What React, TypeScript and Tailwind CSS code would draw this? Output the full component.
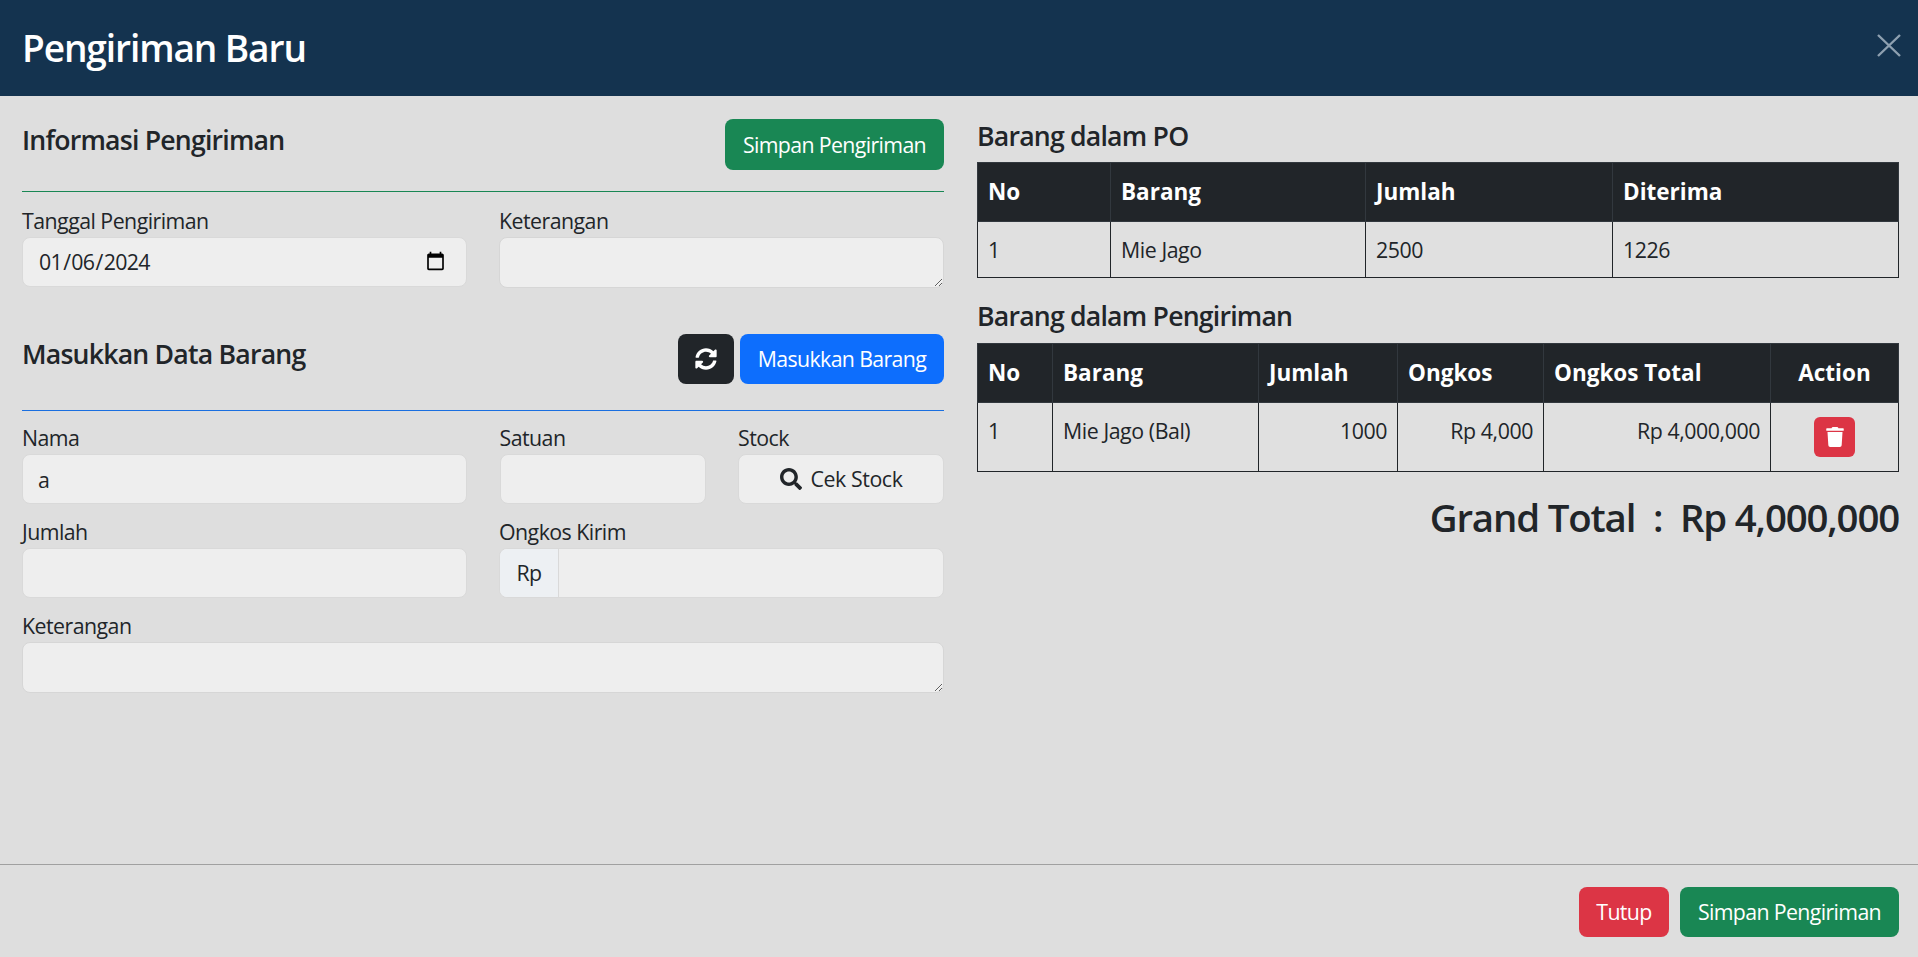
import { FaSearch, FaSyncAlt, FaTrash } from "react-icons/fa";

const label = "block text-[#212529] text-[21.33px] leading-[26px] mb-[3px] tracking-[-0.025em]";
const field = "block w-full h-[50px] rounded-[8px] border border-[#d9d9d9] bg-[#eeeeee] pl-[15px] pr-[18px] text-[21.33px] text-[#212529] outline-none tracking-[-0.03em]";
const area = "block w-full h-[51px] rounded-[8px] border border-[#d6d6d6] bg-[#eeeeee] px-[15px] py-[8px] text-[21.33px] outline-none";
const btn = "rounded-[8px] text-white text-[21.33px] tracking-[-0.03em] flex items-center justify-center";
const sectionTitle = "text-[26.67px] leading-[32px] font-semibold text-[#212529] tracking-[-0.03em]";
const th = "border border-[#32383e] bg-[#212529] text-white text-[22.5px] font-bold px-[10px]";
const td = "border border-[#212529] bg-[#e0e0e0] text-[#212529] text-[21.33px] leading-[32px] align-top px-[10px] tracking-[-0.02em]";

function Field({ title, className, children }: { title: string, className?: string, children: React.ReactNode }) {
    return <div className={className}>
        <label className={label}>{title}</label>
        {children}
    </div>
}

export default function App() {
    return <div className="h-[957px] w-full flex flex-col bg-[#dedede] overflow-hidden font-['Open_Sans',sans-serif]">
        <header className="h-[96px] shrink-0 bg-[#14334f] flex items-center justify-between pl-[22px] pr-[17px]">
            <h1 className="text-[37.1px] font-semibold text-white tracking-[-0.03em]">Pengiriman Baru</h1>
            <svg width="24" height="23" viewBox="0 0 24 23" className="mb-[5px]" aria-label="Tutup">
                <path d="M1 1 L23 22 M23 1 L1 22" stroke="#8ea0b0" strokeWidth="2.4" fill="none" />
            </svg>
        </header>

        <main className="flex-1 grid grid-cols-2 gap-x-[33px] pl-[22px] pr-[19px]">
            <section className="pt-[23px]">
                <div className="flex justify-between items-start h-[73px] border-b border-[#198754]">
                    <h5 className={`${sectionTitle} mt-[5px]`}>Informasi Pengiriman</h5>
                    <button className={`${btn} h-[51px] w-[219px] bg-[#198754]`}>Simpan Pengiriman</button>
                </div>
                <div className="grid grid-cols-[445px_445px] gap-x-[32px] mt-[16px]">
                    <Field title="Tanggal Pengiriman">
                        <input type="date" defaultValue="2024-01-06" className={field} />
                    </Field>
                    <Field title="Keterangan">
                        <textarea className={area} />
                    </Field>
                </div>

                <div className="flex justify-between items-start h-[77px] border-b border-[#1a6fe0] mt-[46px]">
                    <h5 className={`${sectionTitle} mt-[4px]`}>Masukkan Data Barang</h5>
                    <div className="flex gap-[6px]">
                        <button className={`${btn} h-[50px] w-[56px] bg-[#212529]`}><FaSyncAlt size={22} /></button>
                        <button className={`${btn} h-[50px] w-[204px] bg-[#0d6efd]`}>Masukkan Barang</button>
                    </div>
                </div>
                <div className="grid grid-cols-[445px_206px_206px] gap-x-[32.5px] mt-[14px]">
                    <Field title="Nama">
                        <input defaultValue="a" className={field} />
                    </Field>
                    <Field title="Satuan">
                        <input className={field} />
                    </Field>
                    <Field title="Stock">
                        <button className="w-full h-[50px] rounded-[8px] border border-[#d9d9d9] bg-[#eeeeee] text-[21.33px] text-[#212529] flex items-center justify-center gap-[9px] tracking-[-0.02em]">
                            <FaSearch size={22} /> Cek Stock
                        </button>
                    </Field>
                </div>
                <div className="grid grid-cols-[445px_445px] gap-x-[32px] mt-[15px]">
                    <Field title="Jumlah">
                        <input className={field} />
                    </Field>
                    <Field title="Ongkos Kirim">
                        <div className="flex h-[50px] rounded-[8px] border border-[#d9d9d9] bg-[#eeeeee] overflow-hidden">
                            <span className="w-[59px] bg-[#edf0f3] border-r border-[#d9d9d9] flex items-center justify-center text-[21.33px] text-[#212529] tracking-[-0.03em]">Rp</span>
                            <input className="flex-1 min-w-0 bg-transparent outline-none px-[16px]" />
                        </div>
                    </Field>
                </div>
                <Field title="Keterangan" className="mt-[15px]">
                    <textarea className={area} />
                </Field>
            </section>

            <section className="pt-[24px]">
                <h5 className={sectionTitle}>Barang dalam PO</h5>
                <table className="w-full table-fixed border-collapse mt-[10px]">
                    <colgroup>
                        <col className="w-[133px]" />
                        <col className="w-[255px]" />
                        <col className="w-[247px]" />
                        <col />
                    </colgroup>
                    <thead>
                        <tr className="h-[59px]">
                            <th className={`${th} text-left`}>No</th>
                            <th className={`${th} text-left`}>Barang</th>
                            <th className={`${th} text-left`}>Jumlah</th>
                            <th className={`${th} text-left`}>Diterima</th>
                        </tr>
                    </thead>
                    <tbody>
                        <tr className="h-[56px]">
                            <td className={`${td} pt-[12px]`}>1</td>
                            <td className={`${td} pt-[12px]`}>Mie Jago</td>
                            <td className={`${td} pt-[12px]`}>2500</td>
                            <td className={`${td} pt-[12px]`}>1226</td>
                        </tr>
                    </tbody>
                </table>

                <h5 className={`${sectionTitle} mt-[22px]`}>Barang dalam Pengiriman</h5>
                <table className="w-full table-fixed border-collapse mt-[11px]">
                    <colgroup>
                        <col className="w-[75px]" />
                        <col className="w-[206px]" />
                        <col className="w-[139px]" />
                        <col className="w-[146px]" />
                        <col className="w-[227px]" />
                        <col />
                    </colgroup>
                    <thead>
                        <tr className="h-[59px]">
                            <th className={`${th} text-left`}>No</th>
                            <th className={`${th} text-left`}>Barang</th>
                            <th className={`${th} text-left`}>Jumlah</th>
                            <th className={`${th} text-left`}>Ongkos</th>
                            <th className={`${th} text-left`}>Ongkos Total</th>
                            <th className={`${th} text-center`}>Action</th>
                        </tr>
                    </thead>
                    <tbody>
                        <tr className="h-[69px]">
                            <td className={`${td} pt-[12px]`}>1</td>
                            <td className={`${td} pt-[12px]`}>Mie Jago (Bal)</td>
                            <td className={`${td} pt-[12px] text-right`}>1000</td>
                            <td className={`${td} pt-[12px] text-right`}>Rp 4,000</td>
                            <td className={`${td} pt-[12px] text-right`}>Rp 4,000,000</td>
                            <td className={`${td} pt-[14px]`}>
                                <button className="mx-auto w-[41px] h-[40px] rounded-[6px] bg-[#dc3545] flex items-center justify-center text-white">
                                    <FaTrash size={20} />
                                </button>
                            </td>
                        </tr>
                    </tbody>
                </table>
                <h3 className="text-right text-[38.4px] leading-[45px] font-semibold text-[#212529] mt-[23px] tracking-[-0.03em] whitespace-pre">Grand Total  :  Rp 4,000,000</h3>
            </section>
        </main>

        <footer className="h-[93px] shrink-0 border-t border-[#a0a0a0] flex justify-end gap-[11px] pt-[22px] pr-[19px]">
            <button className={`${btn} w-[90px] h-[50px] bg-[#dc3545]`}>Tutup</button>
            <button className={`${btn} w-[219px] h-[50px] bg-[#198754]`}>Simpan Pengiriman</button>
        </footer>
    </div>
}
